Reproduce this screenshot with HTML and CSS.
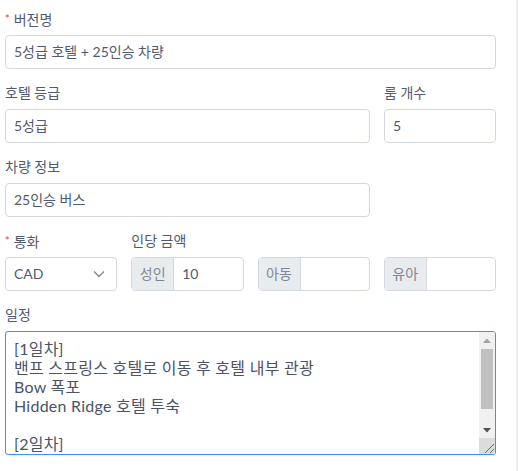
FILE: index.html
```html
<!DOCTYPE html>
<html lang="ko">
<head>
<meta charset="utf-8">
<link rel="stylesheet" href="styles.css">
</head>
<body>
<div class="page">
  <div class="item">
    <div class="label"><span class="req">*</span>버전명</div>
    <div class="input">5성급 호텔 + 25인승 차량</div>
  </div>

  <div class="row row-hotel">
    <div class="item">
      <div class="label">호텔 등급</div>
      <div class="input">5성급</div>
    </div>
    <div class="item">
      <div class="label">룸 개수</div>
      <div class="input">5</div>
    </div>
  </div>

  <div class="row row-hotel">
    <div class="item">
      <div class="label">차량 정보</div>
      <div class="input">25인승 버스</div>
    </div>
  </div>

  <div class="row row-price">
    <div class="item">
      <div class="label"><span class="req">*</span>통화</div>
      <div class="input select">
        <span>CAD</span>
        <svg class="chev" width="12" height="8" viewBox="0 0 12 8"><path d="M1 1.5 L6 6.5 L11 1.5" fill="none" stroke="#808695" stroke-width="1.3"/></svg>
      </div>
    </div>
    <div class="item">
      <div class="label">인당 금액</div>
      <div class="group"><span class="addon">성인</span><span class="gval">10</span></div>
    </div>
    <div class="item">
      <div class="label">&nbsp;</div>
      <div class="group"><span class="addon">아동</span><span class="gval"></span></div>
    </div>
    <div class="item">
      <div class="label">&nbsp;</div>
      <div class="group"><span class="addon">유아</span><span class="gval"></span></div>
    </div>
  </div>

  <div class="item">
    <div class="label">일정</div>
    <div class="area-wrap">
      <textarea class="area">[1일차]
밴프 스프링스 호텔로 이동 후 호텔 내부 관광
Bow 폭포
Hidden Ridge 호텔 투숙

[2일차]
레이크 루이스 관광</textarea>
      <div class="vscroll">
        <div class="sbtn"><svg width="8" height="5" viewBox="0 0 8 5"><path d="M0 5 L4 0.5 L8 5 Z" fill="#a3a3a3"/></svg></div>
        <div class="track"><div class="thumb"></div></div>
        <div class="sbtn"><svg width="8" height="5" viewBox="0 0 8 5"><path d="M0 0 L4 4.5 L8 0 Z" fill="#505050"/></svg></div>
        <div class="corner"><svg width="16" height="16" viewBox="0 0 16 16"><path d="M15 6 L6 15 M15 11 L11 15" stroke="#6a6a6a" stroke-width="1" fill="none"/></svg></div>
      </div>
    </div>
  </div>

  <div class="item">
    <div class="label"><span class="req">*</span>포함 사항</div>
  </div>
</div>
</body>
</html>
```

FILE: styles.css
```css
html, body {
  margin: 0;
  padding: 0;
  background: #fff;
  overflow: hidden;
}
body {
  font-family: Lato, "Noto Sans CJK KR", sans-serif;
  font-size: 14px;
  color: #515a6e;
}
.page {
  width: 518px;
  height: 471px;
  box-sizing: border-box;
  padding: 9px 20px 0 5px;
  border-right: 2px solid #efefef;
  overflow: hidden;
}
.item {
  margin-bottom: 14px;
}
.row {
  display: grid;
}
.row-hotel {
  grid-template-columns: 365px 112px;
  column-gap: 14px;
}
.row-price {
  grid-template-columns: repeat(4, 1fr);
  column-gap: 14px;
}
.label {
  line-height: 20px;
  height: 20px;
  padding-bottom: 6px;
  white-space: nowrap;
}
.req {
  color: #ed4014;
  font-size: 11px;
  margin-right: 4px;
  vertical-align: 2px;
}
.input {
  height: 34px;
  box-sizing: border-box;
  border: 1px solid #d5d8de;
  border-radius: 4px;
  padding: 0 8px;
  line-height: 32px;
  white-space: nowrap;
  overflow: hidden;
}
.select {
  display: flex;
  align-items: center;
  justify-content: space-between;
  padding-right: 11px;
}
.chev {
  display: block;
}
.group {
  display: flex;
  height: 34px;
  box-sizing: border-box;
  border: 1px solid #d5d8de;
  border-radius: 4px;
  overflow: hidden;
}
.addon {
  width: 42px;
  box-sizing: border-box;
  background: #e9ecef;
  color: #808695;
  border-right: 1px solid #d5d8de;
  line-height: 32px;
  text-align: center;
  flex: none;
}
.gval {
  flex: 1;
  padding: 0 8px;
  line-height: 32px;
}
.area-wrap {
  position: relative;
  width: 491px;
  height: 124px;
}
.area {
  display: block;
  width: 491px;
  height: 124px;
  box-sizing: border-box;
  margin: 0;
  border: 1px solid #3597f4;
  border-radius: 3px;
  padding: 7px 26px 7px 8px;
  font-family: Lato, "Noto Sans CJK KR", sans-serif;
  font-size: 16px;
  letter-spacing: 0.25px;
  line-height: 19px;
  color: #4b5366;
  background: #fff;
  outline: none;
  resize: none;
  overflow: hidden;
}
.vscroll {
  position: absolute;
  top: 1px;
  right: 1px;
  bottom: 1px;
  width: 16px;
  display: flex;
  flex-direction: column;
  background: #f1f1f1;
  border-radius: 0 2px 2px 0;
  overflow: hidden;
}
.sbtn {
  height: 16px;
  flex: none;
  display: flex;
  align-items: center;
  justify-content: center;
}
.sbtn svg {
  display: block;
}
.track {
  flex: 1;
  padding: 1px 2px 0;
}
.thumb {
  height: 60px;
  background: #c1c1c1;
}
.corner {
  height: 16px;
  flex: none;
  background: #dcdcdc;
}
.corner svg {
  display: block;
}
```
